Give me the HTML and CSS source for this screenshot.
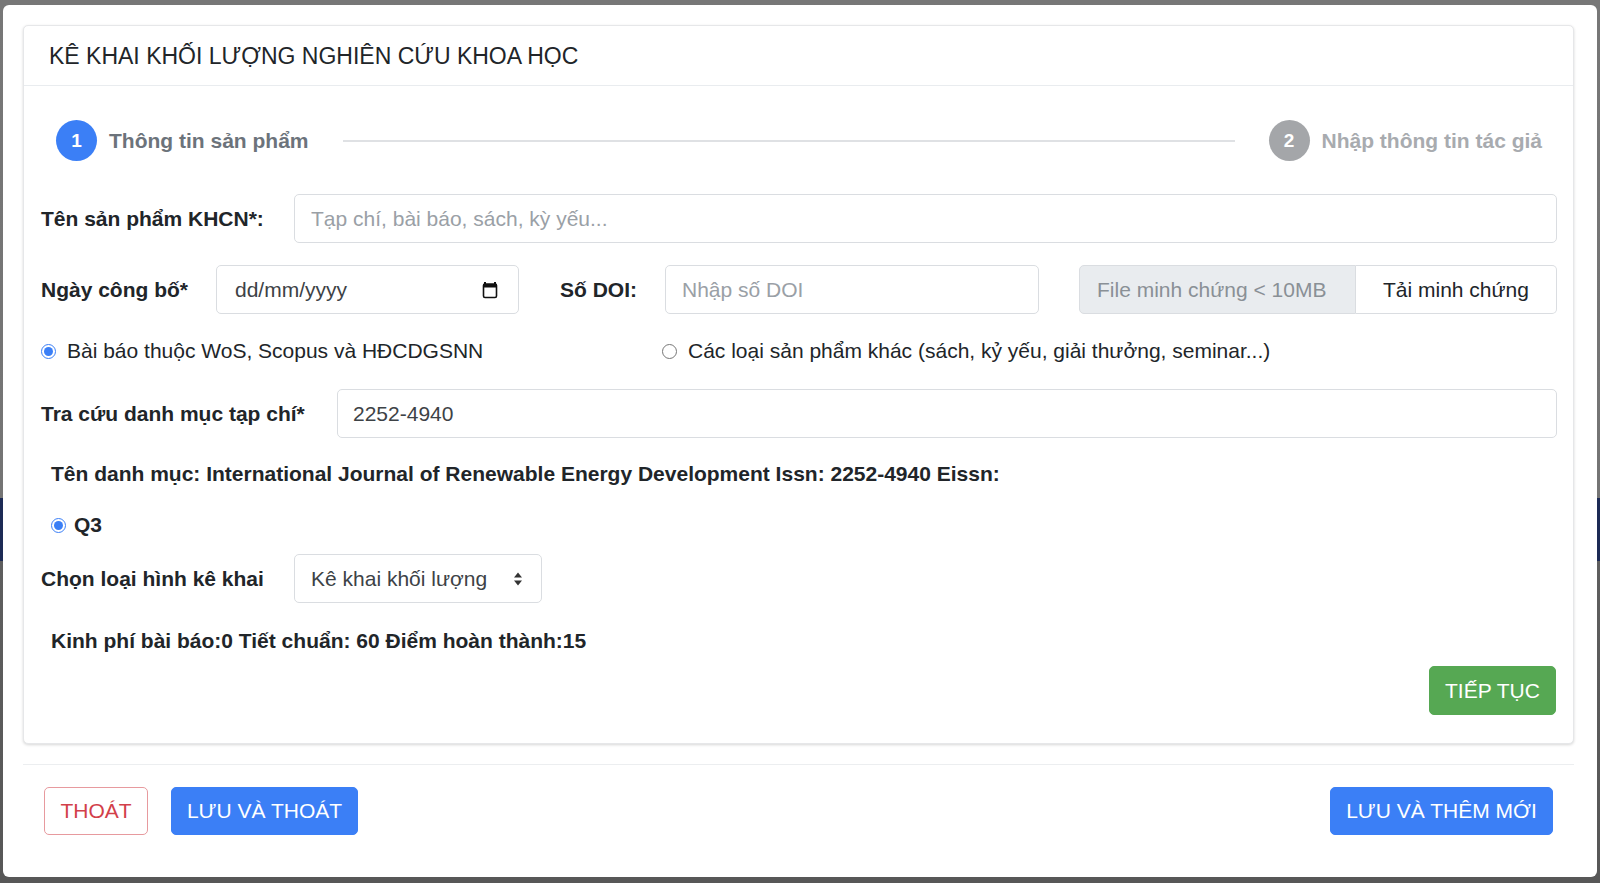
FILE: index.html
```html
<!DOCTYPE html>
<html lang="vi">
<head>
<meta charset="utf-8">
<title>Kê khai khối lượng nghiên cứu khoa học</title>
<link rel="stylesheet" href="styles.css">
</head>
<body>
<div class="modal">
  <div class="card">
    <div class="card-header">KÊ KHAI KHỐI LƯỢNG NGHIÊN CỨU KHOA HỌC</div>
    <div class="card-body">
      <div class="stepper">
        <div class="step active"><span class="step-num">1</span><span class="step-label">Thông tin sản phẩm</span></div>
        <div class="step-line"></div>
        <div class="step"><span class="step-num">2</span><span class="step-label">Nhập thông tin tác giả</span></div>
      </div>

      <div class="form-row row-1">
        <label class="lbl lbl-name">Tên sản phẩm KHCN*:</label>
        <input class="input grow" type="text" placeholder="Tạp chí, bài báo, sách, kỳ yếu...">
      </div>

      <div class="form-row row-2">
        <label class="lbl lbl-date">Ngày công bố*</label>
        <div class="input date-input">
          <span>dd/mm/yyyy</span>
          <svg class="cal-icon" width="16" height="18" viewBox="0 0 16 18"><path d="M3 1v2M13 1v2" stroke="#111" stroke-width="2" fill="none"/><rect x="1.5" y="3" width="13" height="13.5" rx="1.5" fill="none" stroke="#111" stroke-width="1.6"/><rect x="1.5" y="3" width="13" height="3.5" fill="#111"/></svg>
        </div>
        <label class="lbl lbl-doi">Số DOI:</label>
        <input class="input doi-input" type="text" placeholder="Nhập số DOI">
        <div class="file-group">
          <div class="file-name">File minh chứng &lt; 10MB</div>
          <div class="file-btn">Tải minh chứng</div>
        </div>
      </div>

      <div class="radio-row">
        <label class="radio-opt first"><input type="radio" name="kind" checked> Bài báo thuộc WoS, Scopus và HĐCDGSNN</label>
        <label class="radio-opt"><input type="radio" name="kind"> Các loại sản phẩm khác (sách, kỷ yếu, giải thưởng, seminar...)</label>
      </div>

      <div class="form-row row-4">
        <label class="lbl lbl-journal">Tra cứu danh mục tạp chí*</label>
        <input class="input grow value" type="text" value="2252-4940">
      </div>

      <div class="info info-journal">Tên danh mục: International Journal of Renewable Energy Development Issn: 2252-4940 Eissn:</div>

      <div class="q-row">
        <label class="radio-opt bold"><input type="radio" name="q" checked> Q3</label>
      </div>

      <div class="form-row row-select">
        <label class="lbl lbl-select">Chọn loại hình kê khai</label>
        <div class="input select">
          <span>Kê khai khối lượng</span>
          <svg width="10" height="16" viewBox="0 0 10 16"><path d="M5 1.5L9 6.5H1z M5 14.5L9 9.5H1z" fill="#333"/></svg>
        </div>
      </div>

      <div class="info info-cost">Kinh phí bài báo:0 Tiết chuẩn: 60 Điểm hoàn thành:15</div>

      <div class="next-row">
        <button class="btn btn-green">TIẾP TỤC</button>
      </div>
    </div>
  </div>

  <div class="separator"></div>

  <div class="footer">
    <div class="footer-left">
      <button class="btn btn-outline-red">THOÁT</button>
      <button class="btn btn-blue btn-save-exit">LƯU VÀ THOÁT</button>
    </div>
    <button class="btn btn-blue btn-save-new">LƯU VÀ THÊM MỚI</button>
  </div>
</div>
</body>
</html>
```

FILE: styles.css
```css
* { box-sizing: border-box; }

html, body {
  margin: 0;
  padding: 0;
}

body {
  width: 1600px;
  height: 883px;
  overflow: hidden;
  font-family: "Liberation Sans", Arial, Helvetica, sans-serif;
  color: #212529;
  background: linear-gradient(to bottom, #777777 0, #747474 498px, #1c2a55 498px, #1c2a55 561px, #5e5e5e 561px, #575757 100%);
  padding-top: 5px;
  padding-left: 3px;
}

.modal {
  width: 1594px;
  height: 872px;
  background: #fff;
  border-radius: 6px;
  padding: 20px 23px 0 20px;
  display: flex;
  flex-direction: column;
}

.card {
  border: 1px solid #e6e7e9;
  border-radius: 5px;
  box-shadow: 0 1px 3px rgba(0,0,0,0.16);
  background: #fff;
}

.card-header {
  height: 60px;
  border-bottom: 1px solid #e9ecef;
  padding-left: 25px;
  display: flex;
  align-items: center;
  font-size: 23px;
  color: #212529;
  padding-top: 2px;
}

.card-body {
  padding: 34px 16px 28px 17px;
  display: flex;
  flex-direction: column;
}

/* stepper */
.stepper {
  display: flex;
  align-items: center;
  height: 41px;
  padding: 0 15px;
}

.step {
  display: flex;
  align-items: center;
  gap: 12px;
}

.step-num {
  width: 41px;
  height: 41px;
  border-radius: 50%;
  background: #a4a6a9;
  color: #fff;
  font-weight: bold;
  font-size: 19px;
  display: flex;
  align-items: center;
  justify-content: center;
}

.step-label {
  font-size: 21px;
  font-weight: bold;
  color: #a8abaf;
}

.step.active .step-num { background: #3b7ff6; }
.step.active .step-label { color: #6c737b; }

.step-line {
  flex: 1;
  height: 2px;
  background: #dfe1e4;
  margin: 0 34px 0 34px;
}

/* form rows */
.form-row {
  display: flex;
  align-items: center;
  height: 49px;
}

.row-1 { margin-top: 33px; }
.row-2 { margin-top: 22px; }
.row-4 { margin-top: 26px; }
.row-select { margin-top: 17px; }

.lbl {
  font-size: 21px;
  font-weight: bold;
  color: #212529;
  flex: none;
  white-space: nowrap;
}

.lbl-name { width: 253px; }
.lbl-date { width: 175px; }
.lbl-doi { width: 105px; margin-left: 41px; }
.lbl-journal { width: 296px; }
.lbl-select { width: 253px; }

.input {
  height: 49px;
  border: 1px solid #dadde1;
  border-radius: 5px;
  padding: 0 16px;
  font-family: inherit;
  font-size: 21px;
  color: #495057;
  background: #fff;
  outline: none;
}

.input::placeholder { color: #9aa0a6; }

.grow { flex: 1; min-width: 0; }

.value { padding-left: 15px; color: #3d4246; }

.date-input {
  width: 303px;
  display: flex;
  align-items: center;
  justify-content: space-between;
  padding: 0 20px 0 18px;
  color: #3d4246;
}

.cal-icon { flex: none; }

.doi-input { width: 374px; flex: none; }

.file-group {
  flex: 1;
  display: flex;
  height: 49px;
  margin-left: 40px;
}

.file-name {
  flex: 1;
  background: #e9ecef;
  border: 1px solid #dadde1;
  border-radius: 5px 0 0 5px;
  display: flex;
  align-items: center;
  padding-left: 17px;
  font-size: 21px;
  color: #8a9096;
}

.file-btn {
  width: 201px;
  border: 1px solid #dadde1;
  border-left: none;
  border-radius: 0 5px 5px 0;
  display: flex;
  align-items: center;
  justify-content: center;
  font-size: 21px;
  color: #212529;
}

/* radios */
.radio-row {
  display: flex;
  align-items: center;
  height: 24px;
  margin-top: 25px;
}

.radio-opt {
  display: flex;
  align-items: center;
  gap: 11px;
  font-size: 21px;
  color: #212529;
  white-space: nowrap;
}

.radio-opt.first {
  width: 621px;
  margin-left: 0;
  flex: none;
}

.radio-opt input {
  margin: 0;
  width: 15px;
  height: 15px;
  accent-color: #3b7ff6;
  flex: none;
}

.radio-opt.bold {
  font-weight: bold;
  gap: 8px;
}

.q-row {
  height: 24px;
  margin-top: 27px;
  padding-left: 10px;
  display: flex;
  align-items: center;
}

.info {
  height: 24px;
  display: flex;
  align-items: center;
  padding-left: 10px;
  font-size: 21px;
  font-weight: bold;
  color: #212529;
}

.info-journal { margin-top: 24px; }
.info-cost { margin-top: 26px; }

.select {
  width: 248px;
  flex: none;
  display: flex;
  align-items: center;
  justify-content: space-between;
  padding: 0 18px 0 16px;
  color: #3d4246;
}

.next-row {
  display: flex;
  justify-content: flex-end;
  margin-top: 13px;
  padding-right: 1px;
}

/* buttons */
.btn {
  height: 49px;
  border-radius: 5px;
  border: 1px solid transparent;
  font-family: inherit;
  font-size: 21px;
  padding: 0;
  white-space: nowrap;
  cursor: pointer;
  background: #fff;
}

.btn-green {
  width: 127px;
  background: #56a853;
  border-color: #56a853;
  color: #fff;
}

.btn-blue {
  background: #3b7ff6;
  border-color: #3b7ff6;
  color: #fff;
}

.btn-outline-red {
  width: 104px;
  border-color: #e79a9e;
  color: #d2404a;
}

.btn-save-exit { width: 187px; }
.btn-save-new { width: 223px; }

.separator {
  height: 1px;
  background: #eceef0;
  margin-top: 20px;
}

.footer {
  display: flex;
  justify-content: space-between;
  align-items: center;
  margin-top: 22px;
  padding: 0 21px;
}

.footer .btn { height: 48px; }

.footer-left {
  display: flex;
  gap: 23px;
}
```
